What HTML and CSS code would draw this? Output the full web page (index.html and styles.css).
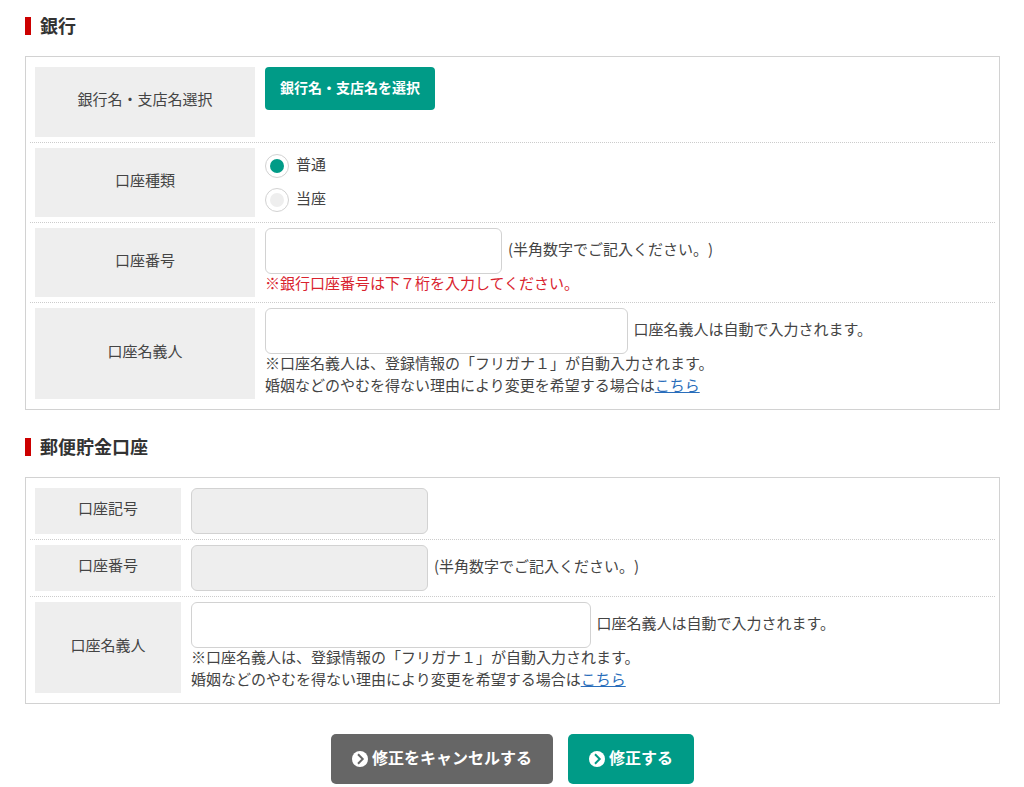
FILE: index.html
```
<!DOCTYPE html>
<html lang="ja">
<head>
<meta charset="utf-8">
<meta name="viewport" content="width=device-width, initial-scale=1">
<title>口座情報</title>
<link rel="stylesheet" href="styles.css">
</head>
<body>
<form class="account-form">
  <section class="section">
    <h2 class="heading"><span>銀行</span></h2>
    <div class="panel panel-bank">
      <div class="row">
        <div class="row-label">銀行名・支店名選択</div>
        <div class="row-body row-body-tall">
          <button type="button" class="btn btn-select">銀行名・支店名を選択</button>
        </div>
      </div>
      <div class="row" role="radiogroup" aria-labelledby="type-label">
        <div class="row-label" id="type-label">口座種類</div>
        <div class="row-body row-body-choices">
          <label class="choice"><input class="radio" type="radio" name="type" checked><span>普通</span></label>
          <label class="choice"><input class="radio" type="radio" name="type"><span>当座</span></label>
        </div>
      </div>
      <div class="row">
        <label class="row-label" for="bank-number">口座番号</label>
        <div class="row-body">
          <div class="field">
            <input class="text-input" id="bank-number" type="text">
            <span class="hint">(半角数字でご記入ください。)</span>
          </div>
          <p class="note note-alert">※銀行口座番号は下７桁を入力してください。</p>
        </div>
      </div>
      <div class="row">
        <label class="row-label" for="bank-holder">口座名義人</label>
        <div class="row-body">
          <div class="field">
            <input class="text-input text-input-half" id="bank-holder" type="text">
            <span class="hint">口座名義人は自動で入力されます。</span>
          </div>
          <p class="note">※口座名義人は、登録情報の「フリガナ１」が自動入力されます。<br>婚姻などのやむを得ない理由により変更を希望する場合は<a class="link" href="#">こちら</a></p>
        </div>
      </div>
    </div>
  </section>

  <section class="section">
    <h2 class="heading"><span>郵便貯金口座</span></h2>
    <div class="panel panel-postal">
      <div class="row">
        <label class="row-label" for="postal-code">口座記号</label>
        <div class="row-body row-body-single">
          <div class="field">
            <input class="text-input" id="postal-code" type="text" disabled>
          </div>
        </div>
      </div>
      <div class="row">
        <label class="row-label" for="postal-number">口座番号</label>
        <div class="row-body row-body-single">
          <div class="field">
            <input class="text-input" id="postal-number" type="text" disabled>
            <span class="hint">(半角数字でご記入ください。)</span>
          </div>
        </div>
      </div>
      <div class="row">
        <label class="row-label" for="postal-holder">口座名義人</label>
        <div class="row-body">
          <div class="field">
            <input class="text-input text-input-half" id="postal-holder" type="text">
            <span class="hint">口座名義人は自動で入力されます。</span>
          </div>
          <p class="note">※口座名義人は、登録情報の「フリガナ１」が自動入力されます。<br>婚姻などのやむを得ない理由により変更を希望する場合は<a class="link" href="#">こちら</a></p>
        </div>
      </div>
    </div>
  </section>

  <div class="actions">
    <button type="button" class="btn btn-action btn-cancel">
      <svg class="icon" viewBox="0 0 16 16" aria-hidden="true"><circle class="icon-disc" cx="8" cy="8" r="8"/><path class="icon-arrow" d="M6 3.3 10.7 8 6 12.7"/></svg>
      <span>修正をキャンセルする</span>
    </button>
    <button type="submit" class="btn btn-action btn-submit">
      <svg class="icon" viewBox="0 0 16 16" aria-hidden="true"><circle class="icon-disc" cx="8" cy="8" r="8"/><path class="icon-arrow" d="M6 3.3 10.7 8 6 12.7"/></svg>
      <span>修正する</span>
    </button>
  </div>
</form>
</body>
</html>
```

FILE: styles.css
```
* {
  box-sizing: border-box;
}

body {
  margin: 0;
  background: #fff;
  color: #444;
  font-family: "Noto Sans CJK JP", sans-serif;
  font-size: 15px;
  line-height: 22px;
  text-spacing-trim: space-all;
}

.account-form {
  padding: 14px 24px 0 25px;
}

.section {
  margin-bottom: 25px;
}

.heading {
  display: flex;
  align-items: center;
  gap: 9px;
  height: 24px;
  margin: 0 0 18px;
  color: #333;
  font-size: 18px;
  font-weight: 700;
  line-height: 24px;
}

.heading span {
  padding-bottom: 3px;
}

.heading::before {
  content: "";
  width: 6px;
  height: 18px;
  background: #c00;
}

.panel {
  padding: 5px 4px;
  border: 1px solid #d2d2d2;
}

.row {
  display: grid;
  grid-template-columns: 220px 1fr;
  gap: 10px;
  padding: 5px;
  border-bottom: 1px dotted #ccc;
}

.panel-postal .row {
  grid-template-columns: 146px 1fr;
}

.row:last-child {
  border-bottom: 0;
}

.row-label {
  display: flex;
  align-items: center;
  justify-content: center;
  padding-bottom: 6px;
  background: #eee;
}

.row-body {
  padding-bottom: 3px;
}

.row-body-tall {
  min-height: 70px;
}

.row-body-single {
  padding-bottom: 0;
}

.row-body-choices {
  padding: 1px 0 0;
}

.field {
  display: flex;
  align-items: center;
  gap: 6px;
}

.text-input {
  flex: 0 1 237px;
  min-width: 0;
  height: 46px;
  padding: 0 10px;
  border: 1px solid #d2d2d2;
  border-radius: 6px;
  background: #fff;
  color: #444;
  font: inherit;
}

.text-input:disabled {
  background: #eee;
}

.text-input-half {
  flex-basis: 50%;
}

.hint {
  padding-bottom: 5px;
}

.note {
  margin: -2px 0 0;
}

.note-alert {
  color: #d9232e;
}

.link {
  color: #2a6ebb;
  text-decoration: underline;
}

.choice {
  display: flex;
  align-items: center;
  gap: 7px;
  height: 34px;
}

.choice span {
  padding-bottom: 4px;
}

.radio {
  appearance: none;
  width: 24px;
  height: 24px;
  margin: 0;
  padding: 4px;
  border: 1px solid #d2d2d2;
  border-radius: 50%;
  background: #fff;
}

.radio::before {
  content: "";
  display: block;
  height: 14px;
  border-radius: 50%;
  background: #eee;
}

.radio:checked::before {
  background: #009b87;
}

.btn {
  border: 0;
  border-radius: 4px;
  background: #009b87;
  color: #fff;
  font-family: inherit;
  font-weight: 700;
  cursor: pointer;
}

.btn-select {
  display: block;
  height: 43px;
  padding: 0 15px 4px;
  font-size: 14px;
}

.actions {
  display: flex;
  justify-content: center;
  gap: 15px;
  padding-top: 5px;
}

.btn-action {
  display: flex;
  align-items: center;
  gap: 4px;
  height: 50px;
  padding: 0 21px;
  border-radius: 5px;
  font-size: 16px;
}

.btn-action span {
  padding-bottom: 4px;
}

.btn-cancel {
  background: #666;
}

.icon {
  width: 16px;
  height: 16px;
}

.icon-disc {
  fill: #fff;
}

.icon-arrow {
  fill: none;
  stroke: #666;
  stroke-width: 2;
}

.btn-submit .icon-arrow {
  stroke: #009b87;
}
```
